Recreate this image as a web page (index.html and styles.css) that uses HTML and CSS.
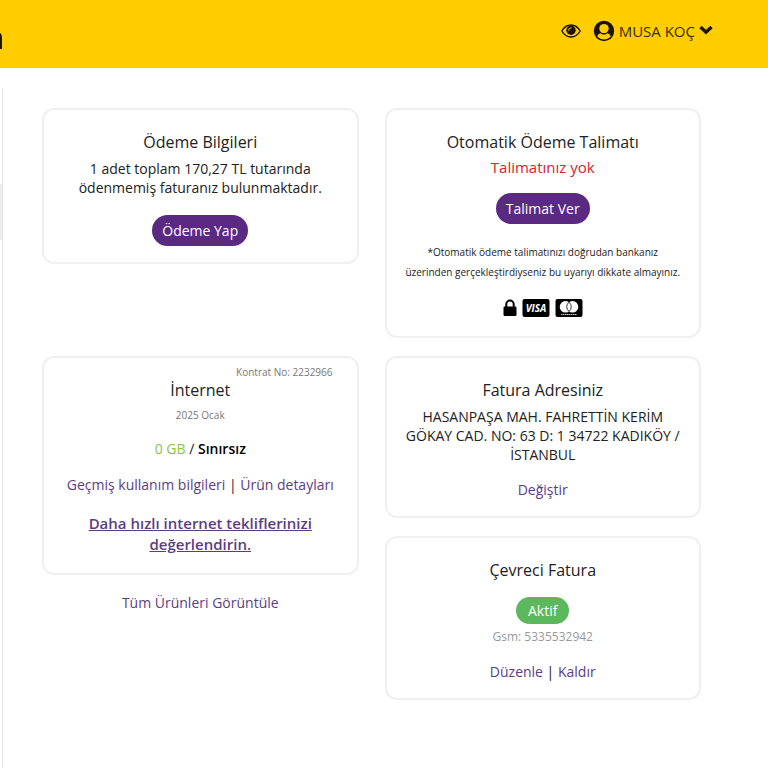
FILE: index.html
```html
<!DOCTYPE html>
<html lang="tr">

<head>
  <meta charset="UTF-8" />
  <meta name="viewport" content="width=device-width, initial-scale=1" />
  <title>Hesabım</title>
  <link rel="stylesheet" href="styles.css">
</head>

<body>
  <header class="header">
    <div class="logo"></div>
    <div class="user-menu">
      <button type="button" class="icon-btn" aria-label="Gizle">
        <svg width="20" height="20" viewBox="0 0 20 20">
          <path d="M0.800 10C3.200 5.900 6.300 4 10 4S16.800 5.900 19.200 10C16.800 14.100 13.700 16 10 16S3.200 14.100 0.800 10Z" fill="none" stroke="#1a1400" stroke-width="1.400" />
          <circle cx="10" cy="9.200" r="4.700" fill="#1a1400" />
          <path d="M7.500 9.200A2.500 2.500 0 0 1 10 6.700" fill="none" stroke="#ffcd00" stroke-width="1" stroke-linecap="round" />
        </svg>
      </button>
      <button type="button" class="user-btn">
        <svg width="22" height="22" viewBox="0 0 22 22">
          <circle cx="11" cy="11" r="10.200" fill="#1a1400" />
          <path d="M4.300 16.400C4.900 14.500 6.200 13.500 7.900 13.300C9.800 14.700 12.200 14.700 14.100 13.300C15.800 13.500 17.100 14.500 17.700 16.400C14.200 20.400 7.800 20.400 4.300 16.400Z" fill="#ffcd00" />
          <circle cx="11" cy="8.600" r="4.700" fill="#ffcd00" />
          <path d="M7.900 13.100C9.800 14.600 12.200 14.600 14.100 13.100" fill="none" stroke="#1a1400" stroke-width="0.900" />
        </svg>
        <span>MUSA KOÇ</span>
        <svg width="14" height="12" viewBox="0 0 14 12">
          <path d="M1.500 2L7 7.200L12.500 2" fill="none" stroke="#1a1400" stroke-width="3.400" />
        </svg>
      </button>
    </div>
  </header>

  <div class="page">
    <aside class="sidebar">
      <div class="sidebar-active"></div>
    </aside>

    <main class="cards">
      <section class="card">
        <h2>Ödeme Bilgileri</h2>
        <p class="text">1 adet toplam 170,27 TL tutarında ödenmemiş faturanız bulunmaktadır.</p>
        <button type="button" class="btn btn-pay">Ödeme Yap</button>
      </section>

      <section class="card">
        <h2>Otomatik Ödeme Talimatı</h2>
        <p class="warning">Talimatınız yok</p>
        <button type="button" class="btn">Talimat Ver</button>
        <p class="note">*Otomatik ödeme talimatınızı doğrudan bankanız<br>üzerinden gerçekleştirdiyseniz bu uyarıyı dikkate almayınız.</p>
        <div class="payment-icons">
          <svg width="14" height="18" viewBox="0 0 14 18">
            <path d="M3.300 8V5.200A3.700 3.700 0 0 1 10.700 5.200V8" fill="none" stroke="#000" stroke-width="2" />
            <rect x="0.500" y="7.500" width="13" height="9.500" rx="1.200" />
          </svg>
          <svg width="28" height="20" viewBox="0 0 28 20">
            <rect x="0.500" y="1" width="27" height="18" rx="2" />
            <text x="14" y="14" class="visa">VISA</text>
          </svg>
          <svg width="28" height="20" viewBox="0 0 28 20">
            <rect x="0.500" y="1" width="27" height="18" rx="2" />
            <circle cx="10.500" cy="8.800" r="5.800" fill="#fff" />
            <circle cx="17.500" cy="8.800" r="5.800" fill="#fff" />
            <path d="M14 4.200A5.800 5.800 0 0 1 14 13.400A5.800 5.800 0 0 1 14 4.200Z" fill="#fff" stroke="#000" stroke-width="0.800" />
            <path d="M6 16.500H22" stroke="#ccc" stroke-width="1" stroke-dasharray="1.500 0.500" />
          </svg>
        </div>
      </section>

      <div class="column">
        <section class="card">
          <span class="contract">Kontrat No: 2232966</span>
          <h2>İnternet</h2>
          <p class="date">2025 Ocak</p>
          <p class="usage"><span class="used">0 GB</span> / <strong>Sınırsız</strong></p>
          <p class="links"><a href="#">Geçmiş kullanım bilgileri</a> | <a href="#">Ürün detayları</a></p>
          <p class="offer"><a href="#">Daha hızlı internet tekliflerinizi değerlendirin.</a></p>
        </section>
        <a href="#" class="all-products">Tüm Ürünleri Görüntüle</a>
      </div>

      <div class="column">
        <section class="card">
          <h2>Fatura Adresiniz</h2>
          <p class="text">HASANPAŞA MAH. FAHRETTİN KERİM GÖKAY CAD. NO: 63 D: 1 34722 KADIKÖY / İSTANBUL</p>
          <p class="links"><a href="#">Değiştir</a></p>
        </section>

        <section class="card">
          <h2>Çevreci Fatura</h2>
          <span class="badge">Aktif</span>
          <p class="gsm">Gsm: 5335532942</p>
          <p class="links"><a href="#">Düzenle</a> | <a href="#">Kaldır</a></p>
        </section>
      </div>
    </main>
  </div>
</body>

</html>
```
FILE: styles.css
```css
* {
  box-sizing: border-box;
}

body {
  margin: 0;
  min-height: 100vh;
  display: flex;
  flex-direction: column;
  font-family: 'Open Sans', 'Noto Sans', sans-serif;
  font-size: 14px;
  line-height: 20px;
  color: #222;
  background: #fff;
}

h2,
p {
  margin: 0;
}

a {
  color: #5c3d82;
  text-decoration: none;
}

button {
  border: none;
  font-family: inherit;
  cursor: pointer;
}

.header {
  display: flex;
  justify-content: space-between;
  height: 68px;
  padding-right: 55px;
  background: #ffcd00;
}

/* tail of the logo at the left edge */
.logo {
  width: 2px;
  height: 16px;
  margin-top: 33px;
  background: #1a1400;
  border-top-right-radius: 2px 6px;
}

.user-menu {
  display: flex;
  align-items: center;
  gap: 12px;
  height: 61px;
}

.icon-btn,
.user-btn {
  display: flex;
  align-items: center;
  padding: 0;
  background: none;
}

.user-btn {
  gap: 4px;
  font-size: 15px;
  line-height: 20px;
  color: #3a2e00;
}

.page {
  flex: 1;
  display: flex;
}

.sidebar {
  width: 3px;
  margin-top: 20px;
  padding-top: 96px;
  border-right: 1px solid #e6e6e6;
}

.sidebar-active {
  height: 56px;
  background: #ececec;
}

.cards {
  flex: 1;
  display: grid;
  grid-template-columns: 1fr 1fr;
  grid-template-rows: auto 1fr;
  gap: 18px 26px;
  align-items: start;
  padding: 40px 67px 40px 39px;
}

.column {
  display: flex;
  flex-direction: column;
  gap: 18px;
}

.card {
  position: relative;
  display: flex;
  flex-direction: column;
  align-items: center;
  padding: 20px 16px 16px;
  border: 2px solid #f0f0f0;
  border-radius: 12px;
  text-align: center;
}

.card h2 {
  font-size: 16px;
  font-weight: 400;
  line-height: 24px;
}

.text {
  max-width: 280px;
  margin-top: 5px;
  line-height: 19px;
}

.btn {
  height: 31px;
  margin-top: 14px;
  padding: 0 10px;
  border-radius: 16px;
  background: #5a2a82;
  color: #fff;
  font-size: 14px;
}

.btn-pay {
  margin-top: 18px;
}

.warning {
  margin-top: 1px;
  font-size: 15px;
  line-height: 24px;
  color: #d9232e;
}

.note {
  margin-top: 18px;
  font-size: 10px;
}

.payment-icons {
  display: flex;
  align-items: center;
  gap: 5px;
  height: 24px;
  margin-top: 14px;
}

.visa {
  fill: #fff;
  font-size: 10px;
  font-weight: 700;
  font-style: italic;
  text-anchor: middle;
}

.contract {
  position: absolute;
  top: 6px;
  right: 24px;
  font-size: 10px;
  line-height: 16px;
  color: #777;
}

.date {
  margin-top: 5px;
  font-size: 10px;
  line-height: 16px;
  color: #777;
}

.usage,
.links {
  margin-top: 16px;
}

.used {
  color: #8bc34a;
}

.usage strong {
  font-weight: 600;
  color: #000;
}

.offer {
  margin: 18px 0 2px;
  font-size: 15px;
  font-weight: 600;
  line-height: 21px;
}

.offer a {
  text-decoration: underline;
}

.all-products {
  text-align: center;
}

.badge {
  margin-top: 15px;
  padding: 0 12px;
  border-radius: 14px;
  background: #5cb85c;
  color: #fff;
  line-height: 27px;
}

.gsm {
  margin-top: 4px;
  font-size: 12px;
  line-height: 18px;
  color: #999;
}
```
